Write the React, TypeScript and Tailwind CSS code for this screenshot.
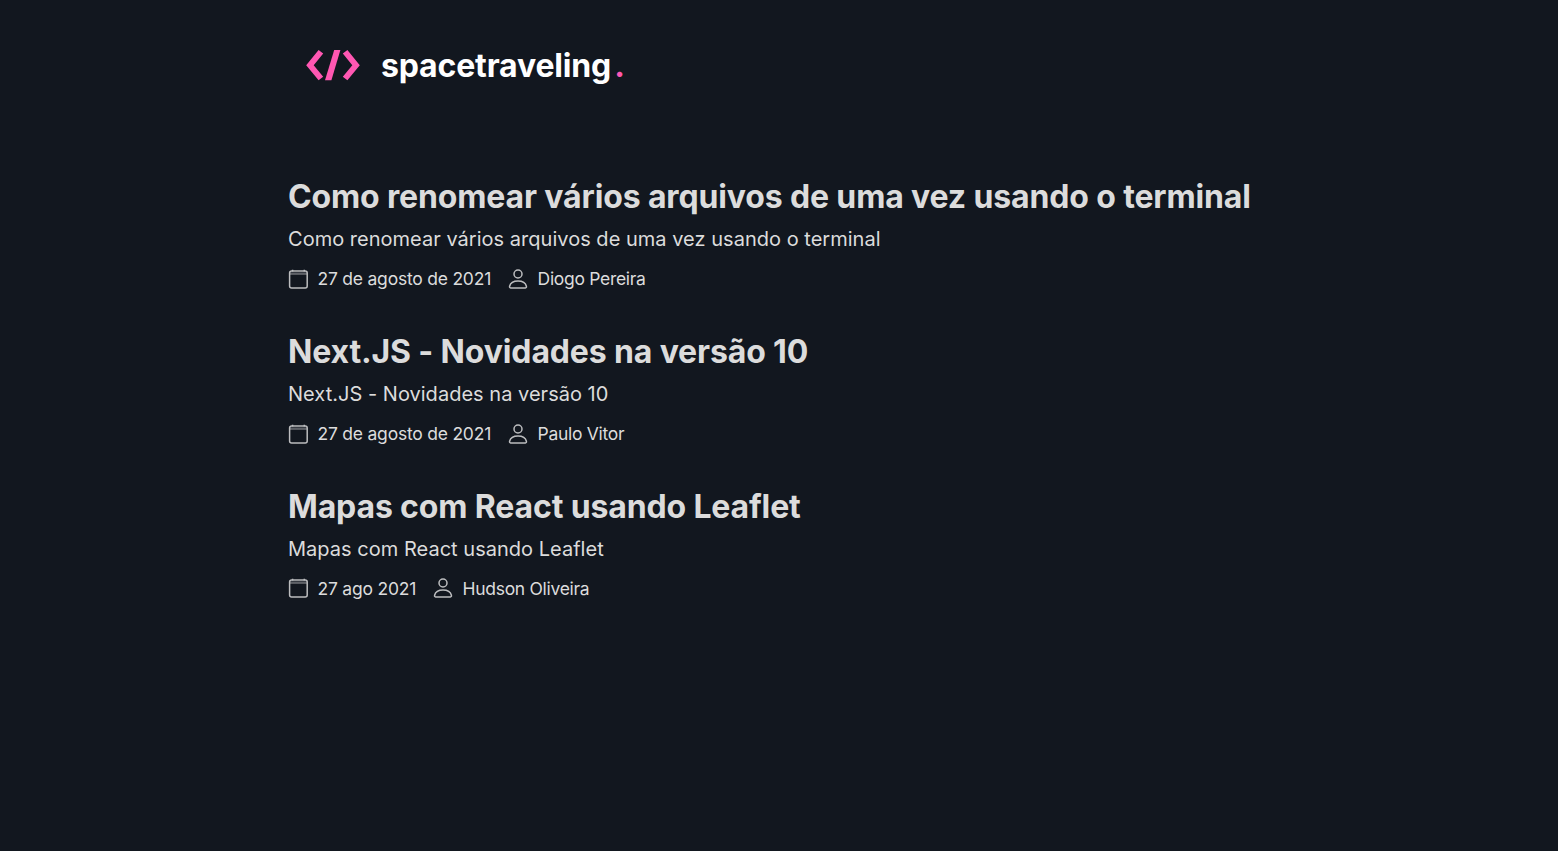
const posts = [
  {
    title: 'Como renomear vários arquivos de uma vez usando o terminal',
    date: '27 de agosto de 2021',
    author: 'Diogo Pereira',
  },
  { title: 'Next.JS - Novidades na versão 10', date: '27 de agosto de 2021', author: 'Paulo Vitor' },
  { title: 'Mapas com React usando Leaflet', date: '27 ago 2021', author: 'Hudson Oliveira' },
];

function CalendarIcon() {
  return (
    <svg className="size-5 shrink-0" viewBox="0 0 20 20" fill="none" stroke="currentColor" strokeWidth="1.5">
      <rect x="1.6" y="1.9" width="17.6" height="17.2" rx="2" />
      <path d="M1.8 4.7H19" strokeWidth="2.4" opacity=".45" />
      <path d="M4.6 .8V2.4M16.3 .8V2.4" />
    </svg>
  );
}

function PersonIcon() {
  return (
    <svg className="size-5 shrink-0" viewBox="0 0 20 20" fill="none" stroke="currentColor" strokeWidth="1.5">
      <circle cx="10" cy="5" r="4" />
      <path d="M2.6 18.9H17.4Q18.7 18.8 18.4 17.3C17.6 14.1 14.5 12.1 10 12.1S2.4 14.1 1.6 17.3Q1.3 18.8 2.6 18.9Z" />
    </svg>
  );
}

function Logo() {
  return (
    <svg className="h-8 w-14 shrink-0 text-[#ff57b2]" viewBox="0 0 56 32" fill="currentColor">
      <path d="M13.6 .1L18.2 3.6L8.7 15.2L18.2 26.7L13.6 30.3L1.2 15.2Z" />
      <path d="M29.2 0H35.4L26.4 30.3H20Z" />
      <path d="M42.4 .1L37.8 3.6L47.3 15.2L37.8 26.7L42.4 30.3L54.8 15.2Z" />
    </svg>
  );
}

export default function App() {
  return (
    <div className="min-h-screen bg-[#12171f] pl-72 pt-11 font-['Inter',sans-serif] text-[#dcdcdc]">
      <header className="flex h-11 items-center pl-[17px]">
        <Logo />
        <span className="ml-5 text-[32px] font-bold leading-none tracking-[-0.16px] text-white">spacetraveling</span>
        <span className="ml-[3px] text-[32px] font-bold leading-none text-[#ff57b2]">.</span>
      </header>
      <main className="mt-[87px] flex flex-col gap-[35px]">
        {posts.map((post) => (
          <article key={post.title} className="group h-30">
            <h2 className="whitespace-nowrap pt-px text-[32px] font-bold leading-[42px] tracking-[-0.14px]">{post.title}</h2>
            <p className="text-[20px] leading-[43px] tracking-[0.02px]">{post.title}</p>
            <div className="flex h-[35px] items-center text-[17.5px] tracking-[-0.26px]">
              <span className="flex text-[#bcbdbf] group-last:pb-0.5">
                <CalendarIcon />
              </span>
              <time className="ml-[9.5px] pt-0.5 tracking-[-0.22px]">{post.date}</time>
              <span className="ml-[16.5px] flex text-[#bcbdbf] group-last:pb-0.5">
                <PersonIcon />
              </span>
              <span className="ml-[10px] pt-0.5 tracking-[-0.3px]">{post.author}</span>
            </div>
          </article>
        ))}
      </main>
    </div>
  );
}
